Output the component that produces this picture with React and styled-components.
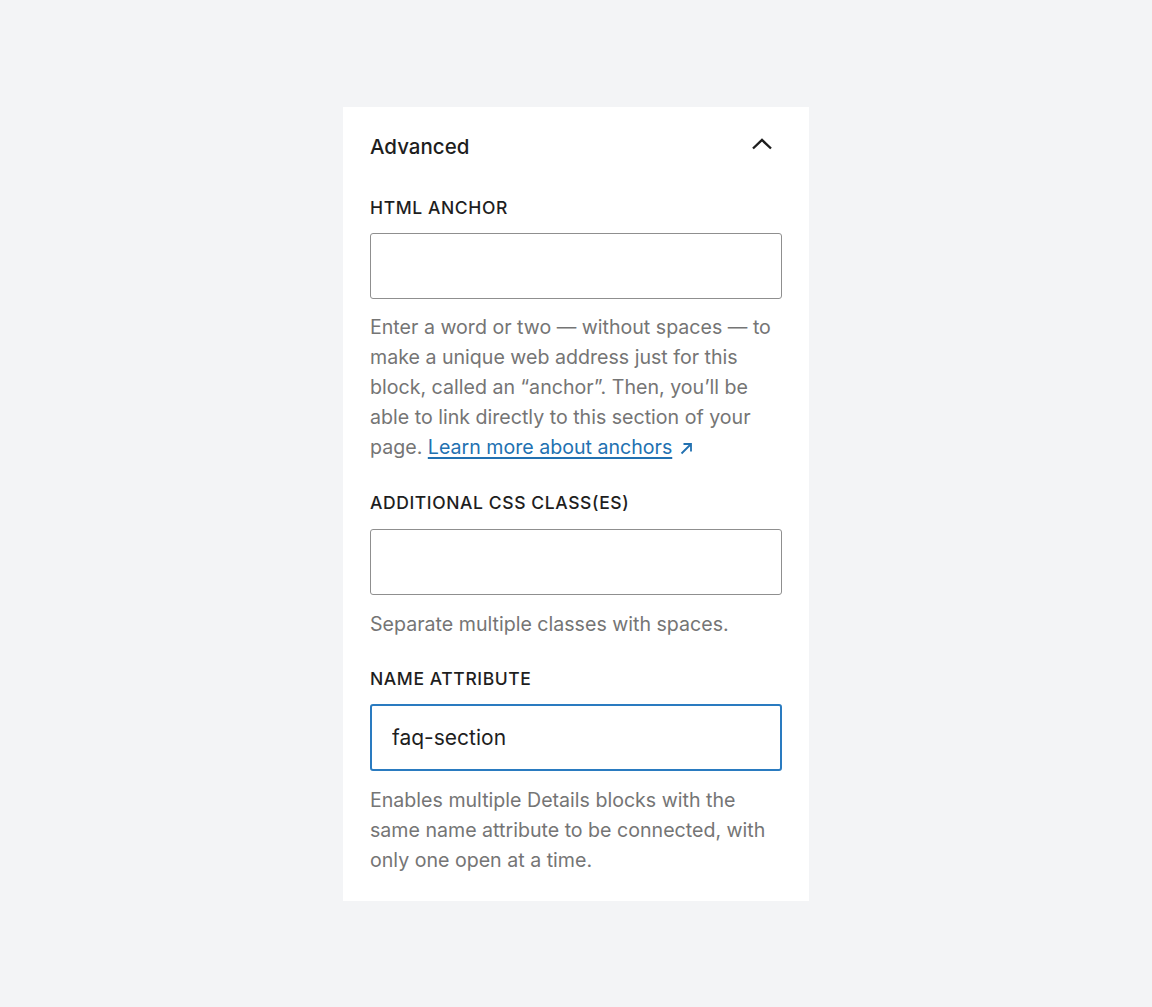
import React from "react";
import styled, { createGlobalStyle } from "styled-components";

const GlobalStyle = createGlobalStyle`
  html, body {
    margin: 0;
    padding: 0;
  }
  body {
    background: #f3f4f6;
    font-family: Inter, "Noto Sans", sans-serif;
    -webkit-font-smoothing: antialiased;
  }
`;

const Page = styled.div`
  min-height: 100vh;
  display: flex;
  align-items: center;
  justify-content: center;
`;

const Panel = styled.div`
  width: 466px;
  box-sizing: border-box;
  background: #ffffff;
  padding: 20px 27px 26px;
`;

const Header = styled.div`
  height: 40px;
  display: flex;
  align-items: center;
  justify-content: space-between;
`;

const Title = styled.h2`
  margin: 0;
  font-size: 20.5px;
  font-weight: 500;
  color: #1e1e1e;
`;

const ToggleButton = styled.button`
  border: 0;
  background: none;
  padding: 0;
  margin-right: 9px;
  margin-top: -6px;
  display: flex;
  cursor: pointer;
  color: #1e1e1e;
`;

const Field = styled.div`
  margin-top: ${(p) => p.$gap}px;
  display: flex;
  flex-direction: column;
`;

const Label = styled.label`
  font-size: 17.5px;
  line-height: 24px;
  font-weight: 500;
  text-transform: uppercase;
  letter-spacing: 0.6px;
  color: #1e1e1e;
  margin-bottom: ${(p) => p.$space || 13}px;
`;

const Input = styled.input`
  height: ${(p) => (p.$focused ? 67 : 66)}px;
  box-sizing: border-box;
  width: 100%;
  border: ${(p) => (p.$focused ? "2px solid #2a7bc0" : "1.5px solid #8f8f8f")};
  border-radius: 3px;
  padding: 0 20px;
  font-family: inherit;
  font-size: 21px;
  color: #1e1e1e;
  outline: none;
  background: #fff;
`;

const Help = styled.p`
  margin: ${(p) => p.$top || 13}px 0 0;
  font-size: 19.6px;
  line-height: 30px;
  color: #757575;
`;

const HelpLink = styled.a`
  color: #2271b1;
  text-decoration: underline;
  text-underline-offset: 3px;
  text-decoration-thickness: 1.5px;
`;

const ExternalIcon = styled.svg`
  margin-left: 8px;
  vertical-align: -1px;
`;

function ChevronUp() {
  return (
    <svg width="22" height="14" viewBox="0 0 22 14" fill="none">
      <path d="M2 11.5 L11 3 L20 11.5" stroke="currentColor" strokeWidth="2.4" />
    </svg>
  );
}

export default function App() {
  return (
    <>
      <GlobalStyle />
      <Page>
        <Panel>
          <Header>
            <Title>Advanced</Title>
            <ToggleButton aria-label="Collapse">
              <ChevronUp />
            </ToggleButton>
          </Header>

          <Field $gap={29}>
            <Label>HTML anchor</Label>
            <Input />
            <Help>
              Enter a word or two — without spaces — to make a unique web
              address just for this block, called an “anchor”. Then, you’ll be
              able to link directly to this section of your page.{" "}
              <HelpLink href="#">Learn more about anchors</HelpLink>
              <ExternalIcon width="13" height="13" viewBox="0 0 13 13" fill="none">
                <path d="M1.5 11.5 L11 2 M3.5 2 H11 V9.5" stroke="#2271b1" strokeWidth="1.8" />
              </ExternalIcon>
            </Help>
          </Field>

          <Field $gap={29}>
            <Label $space={14}>Additional CSS class(es)</Label>
            <Input />
            <Help $top={14}>Separate multiple classes with spaces.</Help>
          </Field>

          <Field $gap={28}>
            <Label>Name attribute</Label>
            <Input $focused defaultValue="faq-section" />
            <Help $top={14}>
              Enables multiple Details blocks with the same name attribute to be
              connected, with only one open at a time.
            </Help>
          </Field>
        </Panel>
      </Page>
    </>
  );
}
